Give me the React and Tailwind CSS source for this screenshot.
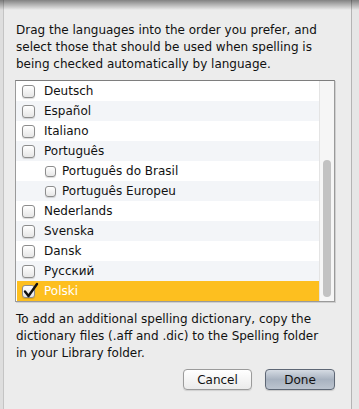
const rows = [
  { label: "Deutsch" },
  { label: "Español" },
  { label: "Italiano" },
  { label: "Português" },
  { label: "Português do Brasil", sub: true },
  { label: "Português Europeu", sub: true },
  { label: "Nederlands" },
  { label: "Svenska" },
  { label: "Dansk" },
  { label: "Русский" },
  { label: "Polski", checked: true },
]

const Checkbox = ({ small, checked }) => (
  <div className={`relative shrink-0 ${small ? "w-[11px] h-[11px]" : "w-[13px] h-[13px]"} rounded-[3px] border border-[#8d8d8d] bg-gradient-to-b from-white to-[#e6e6e6] shadow-[0_1px_1px_rgba(0,0,0,0.15)]`}>
    {checked && (
      <svg className="absolute -left-[1px] -top-[4px]" width="17" height="17" viewBox="0 0 17 17">
        <path d="M3 9.5 L6.5 14 L15 2" fill="none" stroke="#111" strokeWidth="2.4" strokeLinecap="round" strokeLinejoin="round" />
      </svg>
    )}
  </div>
)

export default function App() {
  return (
    <div className="relative w-[359px] h-[409px] overflow-hidden bg-[#e2e2e2] flex text-[12px] text-[#111]" style={{ fontFamily: '"DejaVu Sans", sans-serif' }}>
      <div className="w-[4px] shrink-0 bg-[#dedede] border-r border-[#c4c4c4]" />
      <div className="w-[348px] shrink-0 bg-[#ececec] border-r border-[#b4b4b4] pl-[11px]">
        <p className="pt-[22px] pl-[1px] w-[322px] leading-[17px]">
          Drag the languages into the order you prefer, and select those that should be used when spelling is being checked automatically by language.
        </p>
        <div className="mt-[7px] w-[320px] h-[222px] border border-[#9a9a9a] border-t-[#7e7e7e] bg-white flex shadow-[1px_1px_0_rgba(0,0,0,0.12)]">
          <div className="flex-1 flex flex-col">
            {rows.map((r, i) => (
              <div
                key={r.label}
                className={`h-[20px] flex items-center shrink-0 ${r.checked ? "bg-[#fdbf1f] text-white ml-[1px]" : i % 2 ? "bg-[#f3f5f8]" : "bg-white"} ${r.sub ? "pl-[29px] gap-[6px]" : r.checked ? "pl-[5px] gap-[9px]" : "pl-[6px] gap-[9px]"}`}
              >
                <Checkbox small={r.sub} checked={r.checked} />
                <span>{r.label}</span>
              </div>
            ))}
          </div>
          <div className="w-[15px] shrink-0 bg-[#f6f6f6] border-l border-[#e4e4e4] pt-[79px] pb-[4px] flex justify-center">
            <div className="w-[8px] h-full rounded-full bg-[#c2c2c2]" />
          </div>
        </div>
        <p className="mt-[9px] pl-[1px] w-[312px] leading-[17px]">
          To add an additional spelling dictionary, copy the dictionary files (.aff and .dic) to the Spelling folder in your Library folder.
        </p>
        <div className="mt-[7px] w-[320px] flex justify-end gap-[13px]">
          <button className="w-[69px] h-[21px] rounded-[4px] border border-[#9b9b9b] bg-gradient-to-b from-white to-[#ebebeb] shadow-[0_1px_1px_rgba(0,0,0,0.12)] text-[12px] leading-none">
            Cancel
          </button>
          <button className="w-[70px] h-[21px] rounded-[4px] border border-[#5e6775] bg-gradient-to-b from-[#d5dbe3] via-[#a8b2c0] to-[#bcc4cf] shadow-[0_1px_1px_rgba(0,0,0,0.15)] text-[12px] leading-none">
            Done
          </button>
        </div>
      </div>
      <div className="flex-1 bg-[#e6e6e6]" />
      <div className="absolute inset-x-0 top-0 h-[10px] bg-gradient-to-b from-black/45 to-transparent pointer-events-none" />
    </div>
  )
}
